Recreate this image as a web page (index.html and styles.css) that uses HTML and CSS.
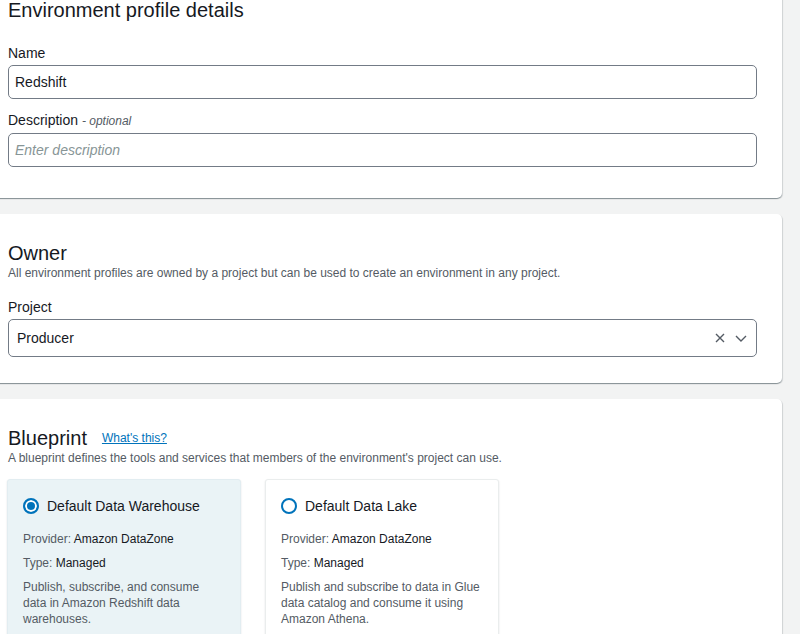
FILE: index.html
```html
<!DOCTYPE html>
<html lang="en">
<head>
<meta charset="utf-8">
<title>Environment profile</title>
<link rel="stylesheet" href="styles.css">
</head>
<body>
<div class="page">
  <section class="card card-first">
    <h2 class="card-title">Environment profile details</h2>
    <div class="field">
      <label class="field-label">Name</label>
      <div class="input">Redshift</div>
    </div>
    <div class="field field-spaced">
      <label class="field-label">Description <span class="optional">- optional</span></label>
      <div class="input input-placeholder">Enter description</div>
    </div>
  </section>

  <section class="card">
    <h2 class="card-title">Owner</h2>
    <p class="card-desc">All environment profiles are owned by a project but can be used to create an environment in any project.</p>
    <div class="field field-project">
      <label class="field-label">Project</label>
      <div class="select">
        <span class="select-value">Producer</span>
        <span class="select-icons">
          <svg class="icon-x" width="10" height="10" viewBox="0 0 10 10"><path d="M1 1 L9 9 M9 1 L1 9" stroke="#545b64" stroke-width="1.4" fill="none"/></svg>
          <svg class="icon-chev" width="12" height="7" viewBox="0 0 12 7"><path d="M1 1 L6 6 L11 1" stroke="#545b64" stroke-width="1.4" fill="none"/></svg>
        </span>
      </div>
    </div>
  </section>

  <section class="card">
    <div class="title-row">
      <h2 class="card-title">Blueprint</h2>
      <a class="info-link" href="#">What's this?</a>
    </div>
    <p class="card-desc">A blueprint defines the tools and services that members of the environment's project can use.</p>
    <div class="tiles">
      <div class="tile tile-selected">
        <div class="tile-head"><span class="radio radio-on"></span><span class="tile-name">Default Data Warehouse</span></div>
        <p class="tile-meta"><span class="meta-key">Provider:</span> Amazon DataZone</p>
        <p class="tile-meta"><span class="meta-key">Type:</span> Managed</p>
        <p class="tile-text">Publish, subscribe, and consume data in Amazon Redshift data warehouses.</p>
      </div>
      <div class="tile">
        <div class="tile-head"><span class="radio"></span><span class="tile-name">Default Data Lake</span></div>
        <p class="tile-meta"><span class="meta-key">Provider:</span> Amazon DataZone</p>
        <p class="tile-meta"><span class="meta-key">Type:</span> Managed</p>
        <p class="tile-text">Publish and subscribe to data in Glue data catalog and consume it using Amazon Athena.</p>
      </div>
    </div>
  </section>
</div>
</body>
</html>
```
FILE: styles.css
```css
html, body {
  margin: 0;
  padding: 0;
  height: 100%;
  overflow: hidden;
  background: #f2f3f3;
}
body {
  font-family: "Liberation Sans", Arial, Helvetica, sans-serif;
  color: #16191f;
  font-size: 14px;
  line-height: 20px;
}
.page {
  display: flex;
  flex-direction: column;
  gap: 16px;
  margin: 0 18px 0 -20px;
}
.card {
  background: #fff;
  border-radius: 5px;
  padding: 27px 25px 26px 28px;
  box-shadow: 0 1px 1px 0 rgba(0, 28, 36, 0.3), 1px 1px 1px 0 rgba(0, 28, 36, 0.12), -1px 1px 1px 0 rgba(0, 28, 36, 0.12);
}
.card-first {
  margin-top: -29px;
  padding-bottom: 31px;
}
.card-title {
  margin: 0;
  font-size: 20px;
  line-height: 24px;
  font-weight: 400;
}
.card-desc {
  margin: 0;
  font-size: 12px;
  line-height: 16px;
  color: #545b64;
}
.field {
  margin-top: 21px;
}
.field-spaced {
  margin-top: 11px;
}
.field-project {
  margin-top: 16px;
}
.field-label {
  display: block;
  font-size: 14px;
  line-height: 20px;
  margin-bottom: 2px;
}
.optional {
  font-size: 12px;
  font-style: italic;
  color: #545b64;
}
.input {
  box-sizing: border-box;
  height: 34px;
  border: 1px solid #737b86;
  border-radius: 5px;
  padding: 6px 6px;
  font-size: 14px;
  line-height: 20px;
}
.input-placeholder {
  color: #879596;
  font-style: italic;
}
.select {
  box-sizing: border-box;
  height: 38px;
  border: 1px solid #737b86;
  border-radius: 5px;
  padding: 8px 9px 8px 8px;
  display: flex;
  align-items: center;
  justify-content: space-between;
}
.select-icons {
  display: flex;
  align-items: center;
  gap: 10px;
}
.title-row {
  display: flex;
  align-items: center;
  gap: 15px;
}
.info-link {
  font-size: 12px;
  line-height: 16px;
  color: #0073bb;
  text-decoration: underline;
}
.tiles {
  display: flex;
  gap: 24px;
  margin-top: 13px;
  margin-left: -1px;
}
.tile {
  box-sizing: border-box;
  width: 234px;
  padding: 16px 15px 10px 15px;
  background: #fff;
  border: 1px solid #eaeded;
  border-radius: 3px;
  box-shadow: 0 1px 2px 0 rgba(0, 28, 36, 0.12);
}
.tile-selected {
  background: #eaf3f6;
  border-color: #e2edf1;
}
.tile-head {
  display: flex;
  align-items: center;
  gap: 8px;
  height: 20px;
}
.radio {
  box-sizing: border-box;
  width: 16px;
  height: 16px;
  border-radius: 50%;
  border: 2px solid #0073bb;
  background: #fff;
  flex: none;
}
.radio-on {
  background: #0073bb;
  box-shadow: inset 0 0 0 2px #fff;
}
.tile-name {
  font-size: 14px;
  line-height: 20px;
}
.tile-meta {
  margin: 8px 0 0;
  font-size: 12px;
  line-height: 16px;
}
.tile-head + .tile-meta {
  margin-top: 15px;
}
.meta-key {
  color: #545b64;
}
.tile-text {
  margin: 8px 0 0;
  font-size: 12px;
  line-height: 16px;
  color: #545b64;
}
```
